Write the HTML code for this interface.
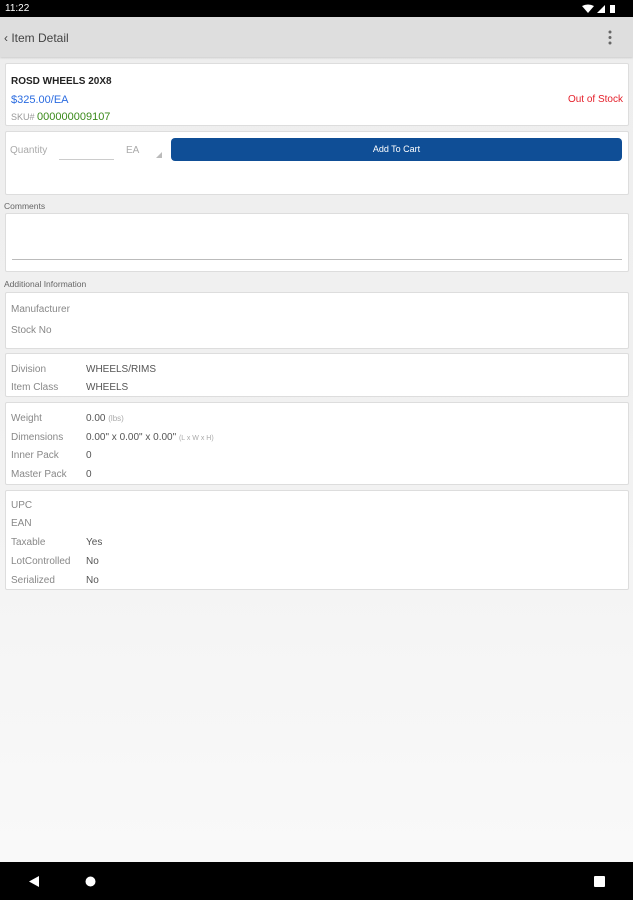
<!DOCTYPE html>
<html><head><style>
*{margin:0;padding:0;box-sizing:border-box}
body{width:633px;height:900px;overflow:hidden;font-family:"Liberation Sans",sans-serif;background:linear-gradient(#eeeeee,#f0f0f0 40%,#fafafa);position:relative;font-size:10px;color:#777}
.abs{position:absolute}
.sb{top:0;left:0;width:633px;height:17px;background:#000;color:#fff;font-size:10px}
.ab{top:17px;left:0;width:633px;height:40px;background:#dedede;box-shadow:0 1px 2px rgba(0,0,0,.15)}
.card{position:absolute;left:5px;width:624px;background:#fff;border:1px solid #ddd;border-radius:2px}
.lbl{position:absolute;left:11px;color:#888;font-size:10px}
.val{position:absolute;left:86px;color:#555;font-size:10px}
.nav{bottom:0;left:0;width:633px;height:38px;background:#000}
</style></head><body>
<div class="abs sb"><span class="abs" style="left:5px;top:3px">11:22</span>
<svg class="abs" style="left:582px;top:4px" width="46" height="10"><path d="M0 2 Q6 -1 12 2 L6 9Z" fill="#fff"/><path d="M15 9 L23 1 L23 9Z" fill="#fff"/><rect x="28" y="1" width="5" height="8" fill="#fff"/></svg></div>
<div class="abs ab"><span class="abs" style="left:4px;top:14px;font-size:12px;color:#444">&lsaquo; Item Detail</span>
<svg class="abs" style="left:608px;top:13px" width="4" height="15"><circle cx="2" cy="2" r="1.5" fill="#666"/><circle cx="2" cy="7.5" r="1.5" fill="#666"/><circle cx="2" cy="13" r="1.5" fill="#666"/></svg></div>

<div class="card" style="top:63px;height:63px">
<span class="abs" style="left:5px;top:12px;font-size:10px;font-weight:bold;color:#222">ROSD WHEELS 20X8</span>
<span class="abs" style="left:5px;top:30px;font-size:11px;color:#2a6be0">$325.00/EA</span>
<span class="abs" style="right:5px;top:30px;font-size:10px;color:#e5202b">Out of Stock</span>
<span class="abs" style="left:5px;top:47px;font-size:9px;color:#999">SKU# <span style="font-size:11px;color:#3a8a1a">000000009107</span></span>
</div>
<div class="card" style="top:131px;height:64px">
<span class="abs" style="left:4px;top:13px;color:#aaa;font-size:10px">Quantity</span>
<div class="abs" style="left:53px;top:27px;width:55px;height:1px;background:#ccc"></div>
<span class="abs" style="left:120px;top:13px;color:#aaa;font-size:10px">EA</span>
<svg class="abs" style="left:150px;top:20px" width="6" height="6"><path d="M6 0V6H0Z" fill="#bbb"/></svg>
<div class="abs" style="left:165px;top:6px;width:451px;height:23px;background:#0f4e96;border-radius:4px;color:#fff;font-size:9px;text-align:center;line-height:23px">Add To Cart</div>
</div>
<span class="abs" style="left:4px;top:201px;font-size:8.5px;color:#666">Comments</span>
<div class="card" style="top:213px;height:59px"><div class="abs" style="left:6px;top:45px;width:610px;height:1px;background:#bbb"></div></div>
<span class="abs" style="left:4px;top:279px;font-size:8.5px;color:#666">Additional Information</span>
<div class="card" style="top:292px;height:57px"></div>
<div class="card" style="top:353px;height:44px"></div>
<div class="card" style="top:402px;height:83px"></div>
<div class="card" style="top:490px;height:100px"></div>
<span class="lbl" style="top:304px">Manufacturer</span>
<span class="lbl" style="top:325px">Stock No</span>
<span class="lbl" style="top:364px">Division</span><span class="val" style="top:364px">WHEELS/RIMS</span>
<span class="lbl" style="top:382px">Item Class</span><span class="val" style="top:382px">WHEELS</span>
<span class="lbl" style="top:413px">Weight</span><span class="val" style="top:413px">0.00 <span style="font-size:8px;color:#aaa">(lbs)</span></span>
<span class="lbl" style="top:432px">Dimensions</span><span class="val" style="top:432px">0.00" x 0.00" x 0.00" <span style="font-size:7px;color:#aaa">(L x W x H)</span></span>
<span class="lbl" style="top:450px">Inner Pack</span><span class="val" style="top:450px">0</span>
<span class="lbl" style="top:469px">Master Pack</span><span class="val" style="top:469px">0</span>
<span class="lbl" style="top:500px">UPC</span>
<span class="lbl" style="top:518px">EAN</span>
<span class="lbl" style="top:537px">Taxable</span><span class="val" style="top:537px">Yes</span>
<span class="lbl" style="top:556px">LotControlled</span><span class="val" style="top:556px">No</span>
<span class="lbl" style="top:575px">Serialized</span><span class="val" style="top:575px">No</span>

<div class="abs nav">
<svg class="abs" style="left:29px;top:14px" width="10" height="11"><path d="M0 5.5L10 0V11Z" fill="#fff"/></svg>
<svg class="abs" style="left:85px;top:14px" width="11" height="11"><circle cx="5.5" cy="5.5" r="5" fill="#fff"/></svg>
<svg class="abs" style="left:594px;top:14px" width="11" height="11"><rect width="11" height="11" rx="1" fill="#fff"/></svg>
</div>
</body></html>
